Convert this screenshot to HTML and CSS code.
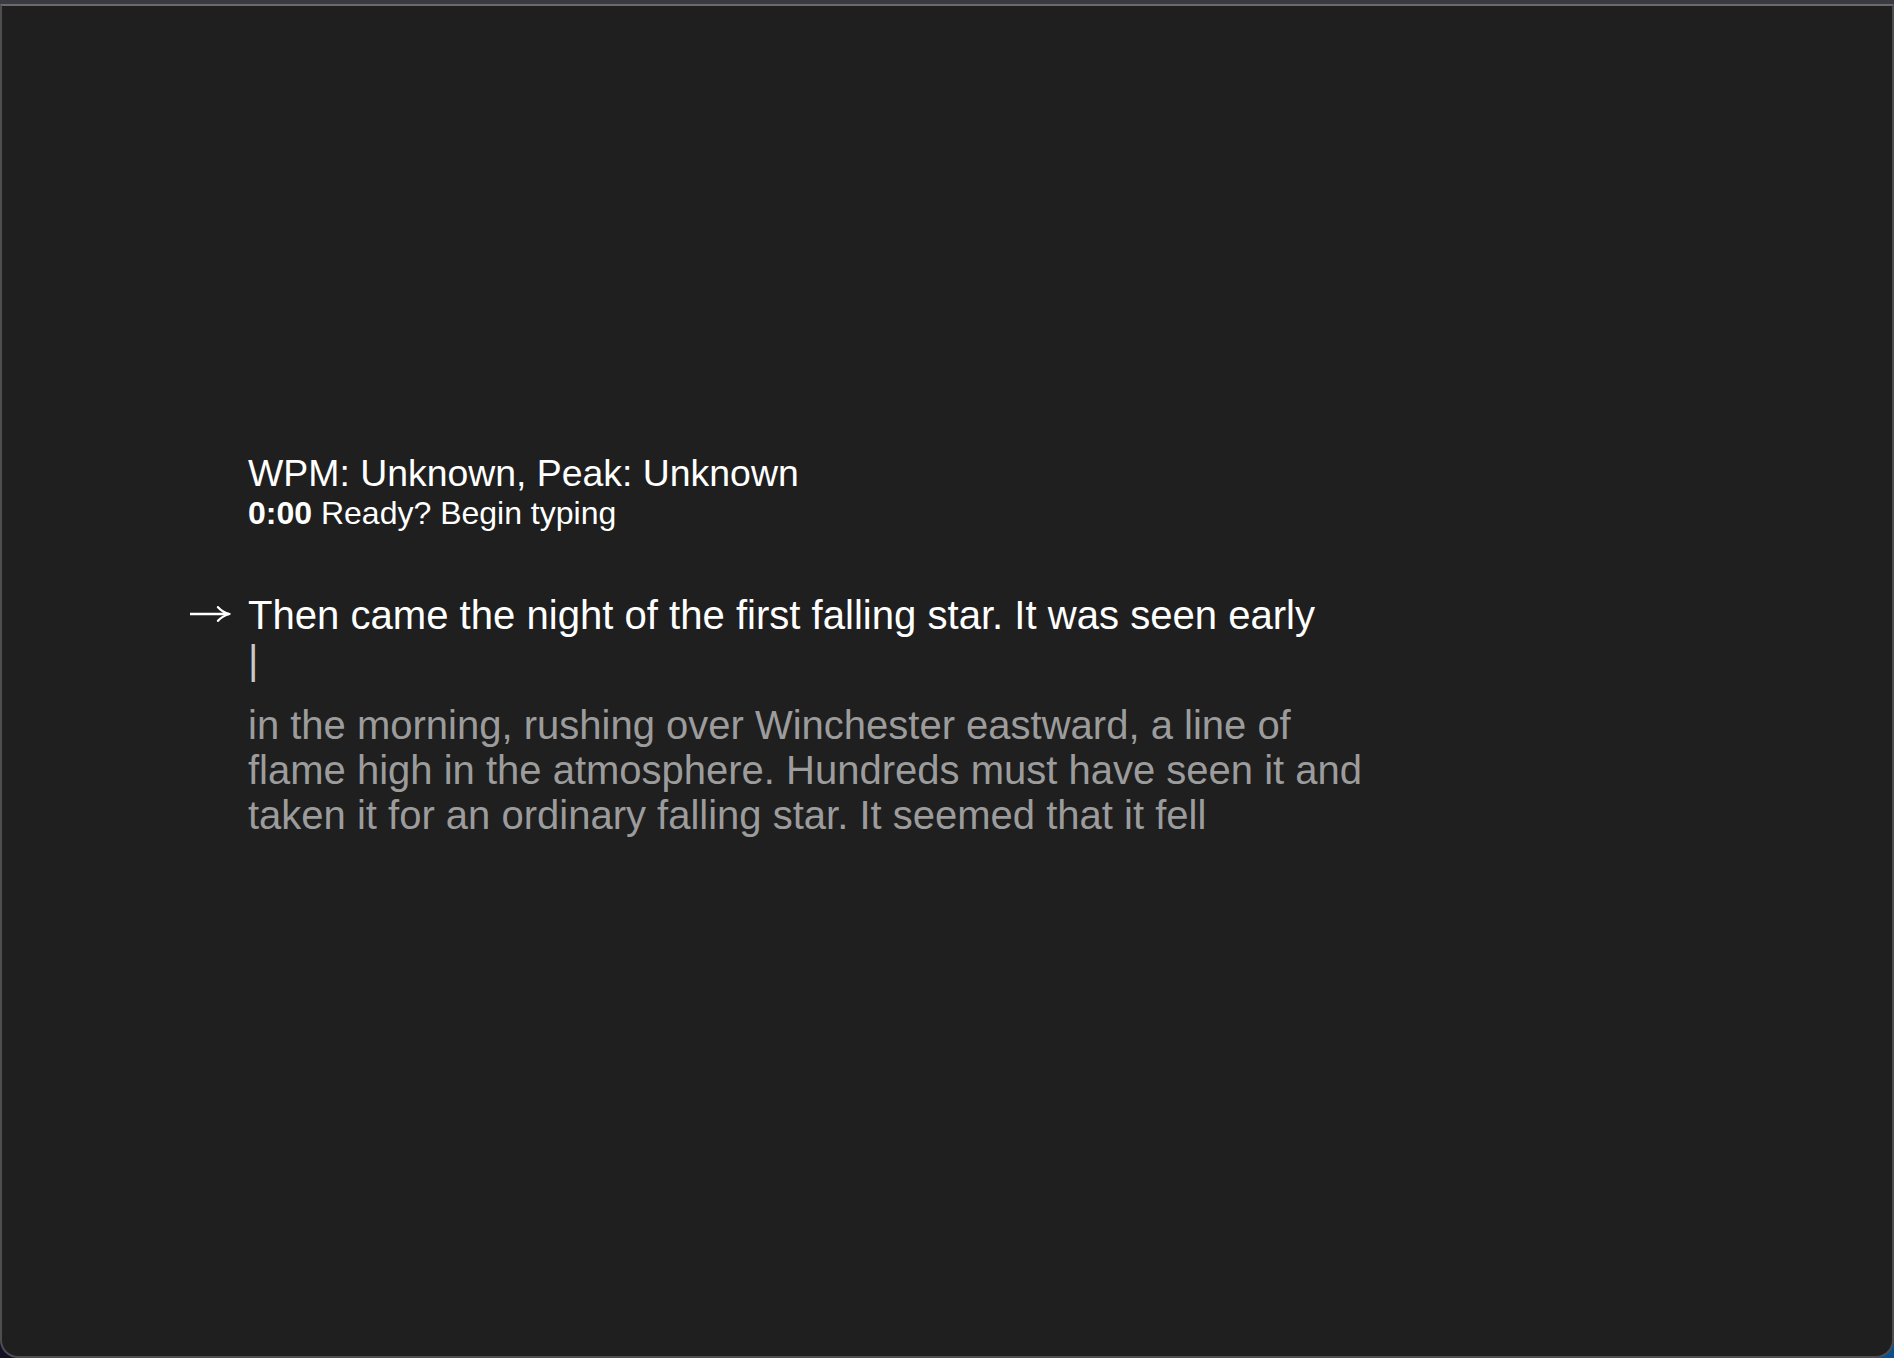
FILE: index.html
```html
<!DOCTYPE html>
<html lang="en">
<head>
<meta charset="utf-8">
<title>Typing</title>
<link rel="stylesheet" href="styles.css">
</head>
<body>
<div class="topbar"></div>
<main class="window">
  <section class="typer">
    <div class="stats">
      <div class="wpm">WPM: Unknown, Peak: Unknown</div>
      <div class="status"><b>0:00</b> Ready? Begin typing</div>
    </div>
    <div class="gutter">
      <svg class="arrow" width="42" height="16" viewBox="0 0 42 16" aria-label="→">
        <path d="M1 8 H39.5" stroke="#ffffff" stroke-width="2.3" fill="none"/>
        <path d="M29 1.2 Q33.5 6.2 40.5 8 Q33.5 9.8 29 14.8" stroke="#ffffff" stroke-width="2.3" fill="none" stroke-linecap="round" stroke-linejoin="round"/>
      </svg>
    </div>
    <div class="current">Then came the night of the first falling star. It was seen early</div>
    <div class="cursor-line"><span class="cursor">|</span></div>
    <div class="upcoming">in the morning, rushing over Winchester eastward, a line of flame high in the atmosphere. Hundreds must have seen it and taken it for an ordinary falling star. It seemed that it fell</div>
  </section>
</main>
</body>
</html>
```

FILE: styles.css
```css
html, body {
  margin: 0;
  padding: 0;
  height: 100%;
}
body {
  background: linear-gradient(90deg, #120f26 0%, #0b4f8c 100%);
  font-family: "Liberation Sans", Arial, Helvetica, sans-serif;
  overflow: hidden;
}
.topbar {
  height: 4px;
  background: #3a3b41;
}
.window {
  box-sizing: border-box;
  height: 1354px;
  background: #1f1f1f;
  border: 2px solid #4e4e50;
  border-top: 2px solid #6a6a6c;
  border-radius: 0 0 18px 18px;
  padding: 446px 0 0 185px;
}
.typer {
  display: grid;
  grid-template-columns: 61px 1130px;
  color: #ffffff;
}
.stats {
  grid-column: 2;
}
.wpm {
  font-size: 37.4px;
  line-height: 42px;
}
.status {
  font-size: 32px;
  line-height: 40px;
  margin-top: -1px;
}
.status b {
  font-weight: 700;
}
.gutter {
  grid-column: 1;
  margin-top: 60px;
  padding: 13px 0 0 2px;
  height: 45px;
  box-sizing: border-box;
}
.arrow {
  display: block;
}
.current {
  grid-column: 2;
  font-size: 40.1px;
  line-height: 45px;
  margin-top: 60px;
  color: #ffffff;
}
.cursor-line {
  grid-column: 2;
  font-size: 40px;
  line-height: 45px;
}
.cursor {
  color: #c8c8c8;
}
.upcoming {
  grid-column: 2;
  font-size: 40px;
  line-height: 45px;
  margin-top: 20px;
  color: #9c9c9c;
}
```
